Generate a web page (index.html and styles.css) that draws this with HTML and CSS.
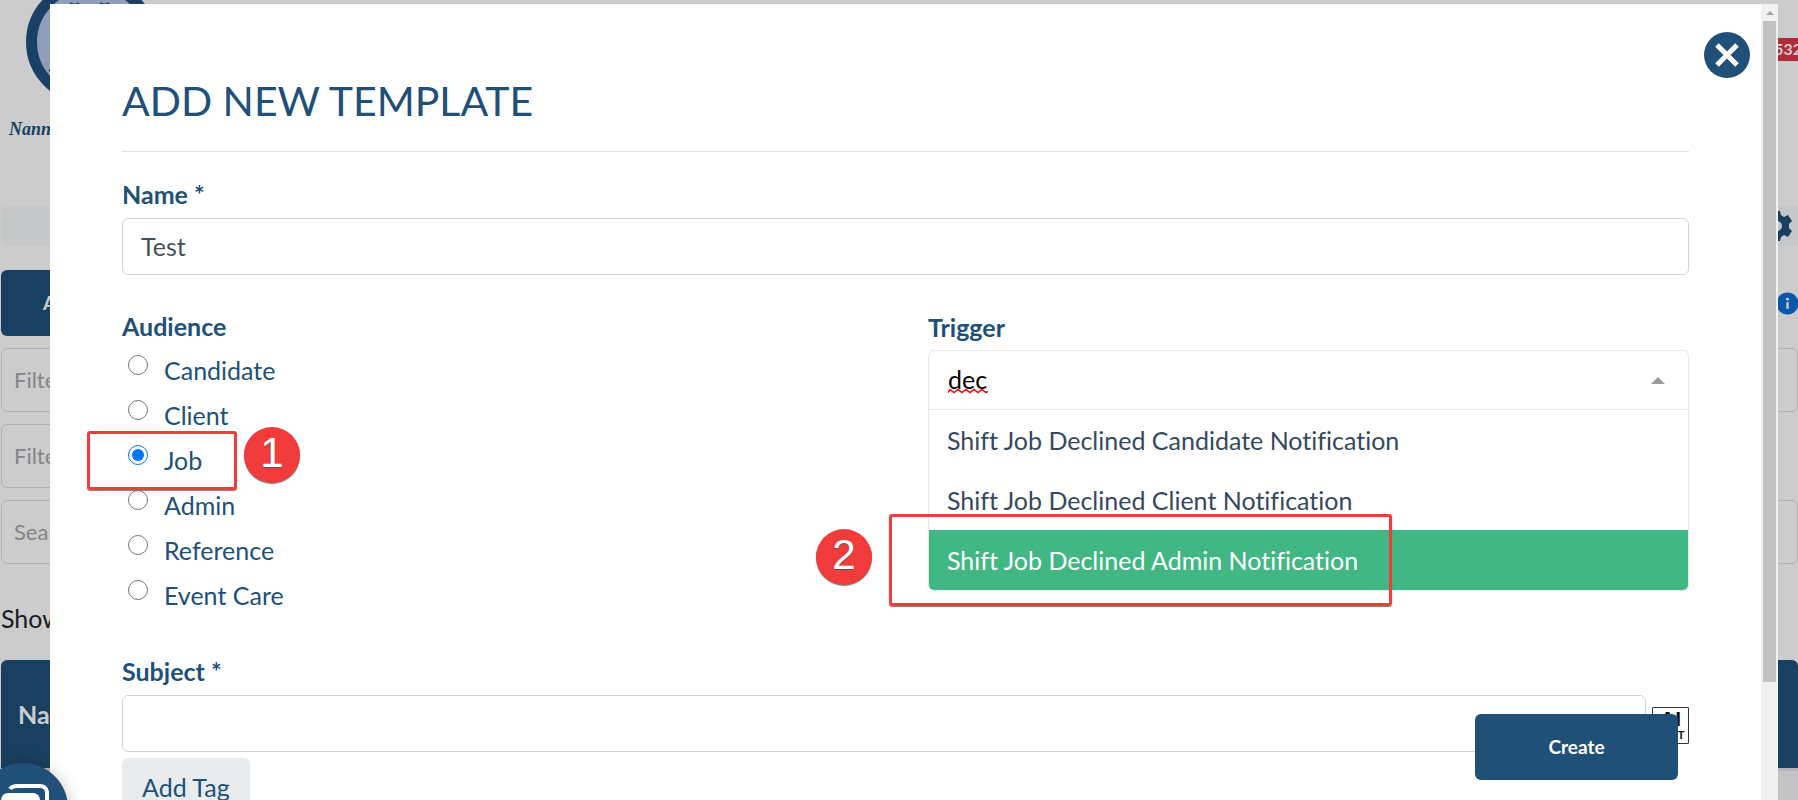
FILE: index.html
```html
<!DOCTYPE html>
<html lang="en">
<head>
<meta charset="utf-8">
<title>Add New Template</title>
<link rel="stylesheet" href="styles.css">
</head>
<body>
<div class="page">
  <header class="page-top">
    <div class="brand">
      <svg class="brand-mark" viewBox="0 0 136 106" aria-hidden="true"><ellipse cx="67" cy="42" rx="60.500" ry="58" fill="#b3c5ea" stroke="#225080" stroke-width="11"/><path d="M24 71l4-3M45 3q5 3 9 0M75 3q5 3 9 0" stroke="#225080" stroke-width="2" fill="none"/></svg>
      <span class="brand-name">Nannies</span>
    </div>
    <span class="count">532</span>
  </header>
  <div class="strip">
    <svg class="gear" viewBox="0 0 32 32" aria-hidden="true"><path fill="#205078" fill-rule="evenodd" d="M13 1h6l1 4 3 2 4-2 4 6-3 3v4l3 3-4 6-4-2-3 2-1 4h-6l-1-4-3-2-4 2-4-6 3-3v-4l-3-3 4-6 4 2 3-2zM16 11a5 5 0 1 0 0 10a5 5 0 0 0 0-10z"/></svg>
  </div>
  <div class="page-actions">
    <button class="page-btn" type="button">Add New Template</button>
    <svg class="info" viewBox="0 0 24 24" aria-hidden="true"><circle cx="12" cy="12" r="11.500" fill="#0d6fd8"/><circle cx="12" cy="7.500" r="1.500" fill="#fff"/><path d="M12 10.500v7" stroke="#fff" stroke-width="2.500"/></svg>
  </div>
  <div class="filters">
    <input class="filter" aria-label="Filter by audience" placeholder="Filter by audience">
    <input class="filter filter-half" aria-label="Filter by type" placeholder="Filter by type">
    <input class="filter" aria-label="Search" placeholder="Search">
  </div>
  <p class="showing">Showing</p>
  <div class="table-head">Name</div>
  <div class="table-row"></div>
</div>

<div class="overlay">
  <div class="modal" role="dialog" aria-labelledby="title">
    <form class="form">
      <button class="close" type="button" aria-label="Close"><svg viewBox="0 0 46 46"><path d="M13 13l20 20M33 13l-20 20" stroke="#fff" stroke-width="5"/></svg></button>
      <h1 class="title" id="title">ADD NEW TEMPLATE</h1>
      <div class="field">
        <label class="label" for="name">Name *</label>
        <input class="input" id="name" value="Test">
      </div>
      <div class="columns">
        <fieldset class="audience">
          <legend class="label">Audience</legend>
          <label class="choice"><input type="radio" name="audience">Candidate</label>
          <label class="choice"><input type="radio" name="audience">Client</label>
          <div class="marked">
            <label class="choice"><input type="radio" name="audience" checked>Job</label>
            <span class="frame frame-job"></span>
            <span class="step step-job">1</span>
          </div>
          <label class="choice"><input type="radio" name="audience">Admin</label>
          <label class="choice"><input type="radio" name="audience">Reference</label>
          <label class="choice"><input type="radio" name="audience">Event Care</label>
        </fieldset>
        <div class="trigger">
          <label class="label" for="trigger">Trigger</label>
          <div class="combo">
            <div class="combo-head">
              <input class="combo-input" id="trigger" value="dec" spellcheck="false">
              <svg class="squiggle" viewBox="0 0 40 6" aria-hidden="true"><path d="M0 4.500l2-3 4 3 4-3 4 3 4-3 4 3 4-3 4 3 4-3 4 3 2-1" fill="none" stroke="#f00" stroke-width="1.500"/></svg>
              <span class="caret"></span>
            </div>
            <ul class="options">
              <li class="option">Shift Job Declined Candidate Notification</li>
              <li class="option">Shift Job Declined Client Notification</li>
              <li class="option option-active">Shift Job Declined Admin Notification
                <span class="frame frame-option"></span>
                <span class="step step-option">2</span>
              </li>
            </ul>
          </div>
        </div>
      </div>
      <div class="field">
        <label class="label" for="subject">Subject *</label>
        <div class="subject-row">
          <input class="input" id="subject">
          <span class="test-icon"><b class="test-mark">AI</b><b class="test-word">TEST</b></span>
        </div>
      </div>
      <button class="tag" type="button">Add Tag</button>
      <button class="create" type="button">Create</button>
    </form>
    <div class="rail" aria-hidden="true"><span class="rail-up"></span><span class="thumb"></span></div>
  </div>
</div>
<button class="chat" type="button" aria-label="Chat"><svg viewBox="0 0 90 90"><path d="M32 26q2-3 8-3h22q6 0 7 6v24" fill="none" stroke="#fff" stroke-width="4"/><rect x="23" y="30" width="39" height="32" rx="7" fill="#fff"/></svg></button>
</body>
</html>
```
FILE: styles.css
```css
* { box-sizing: border-box; }

body {
  margin: 0;
  height: 100vh;
  overflow: hidden;
  font-family: Lato, "Open Sans", sans-serif;
  font-size: 25px;
  font-variant-ligatures: none;
  line-height: 30px;
  color: #205078;
}

input, button { font: inherit; }

/* Page behind the dialog */
.page { padding-left: 1px; }
.page-top { display: flex; justify-content: space-between; height: 206px; }
.brand { display: flex; flex-direction: column; align-items: flex-start; gap: 8px; padding-left: 8px; }
.brand-mark { width: 136px; height: 106px; margin-left: 16px; }
.brand-name { font-family: "Liberation Serif", serif; font-size: 18px; font-weight: bold; font-style: italic; }
.count { height: 23px; margin-top: 38px; padding: 0 0 0 6px; background: #dc3545; color: #fff; font-size: 16px; font-weight: bold; line-height: 22px; margin-right: -4px; }
.strip { display: flex; justify-content: flex-end; align-items: center; height: 40px; padding-right: 5px; border-radius: 6px 0 0 6px; background: #f8f9fb; }
.gear { width: 32px; height: 32px; }
.page-actions { display: flex; justify-content: space-between; align-items: center; margin-top: 24px; }
.page-btn { height: 66px; padding: 0 42px; border: 0; border-radius: 6px; background: #205078; color: #fff; font-size: 19px; font-weight: bold; }
.info { width: 23px; height: 23px; margin-right: -1px; }
.filters { display: flex; flex-direction: column; gap: 12px; margin-top: 12px; }
.filter { width: 100%; height: 64px; padding: 0 12px 2px; border: 1px solid #dddfe2; border-radius: 6px; background: #fff; font-size: 22px; }
.filter-half { width: 50%; }
.filter::placeholder { color: #a5a7aa; }
.showing { margin: 39px 0 27px; color: #212529; }
.table-head { height: 108px; padding: 39px 17px; border-radius: 6px 6px 0 0; background: #205078; color: #fff; font-weight: bold; }
.table-row { height: 40px; border-top: 3px solid #dee2e6; background: #f5f6f8; }

/* Dialog */
.overlay { position: fixed; inset: 0; padding: 4px 20px 0 50px; background: rgba(0, 0, 0, 0.2); }
.modal { display: flex; height: 100%; overflow: hidden; background: #fff; }
.form { position: relative; flex: 1; padding: 72px 72px 0; }
.title { margin: 0; padding-bottom: 25px; border-bottom: 1px solid #dfe2e5; font-size: 41px; font-weight: normal; line-height: 50px; }
.close { position: absolute; top: 28px; right: 11px; width: 46px; height: 46px; padding: 0; border: 0; border-radius: 50%; background: #205078; }
.close svg { display: block; }
.label { display: block; padding: 0; font-weight: bold; line-height: 30px; }
.field { display: flex; flex-direction: column; gap: 9px; margin-top: 27px; }
.input { width: 100%; height: 57px; padding: 0 18px 2px; border: 1px solid #ced4da; border-radius: 6px; background: #fff; color: #495057; }
.columns { display: grid; grid-template-columns: 1fr 1fr; gap: 45px; margin-top: 36px; }
.audience { margin: 0; padding: 0; border: 0; }
.choice { display: flex; gap: 16px; height: 45px; padding: 14px 0 0 6px; line-height: 30px; }
.choice input { width: 20px; height: 20px; margin: 0; }
.marked { position: relative; }
.frame { position: absolute; border: 3px solid #f23c3c; border-radius: 3px; box-shadow: 0 1px 1px #777; }
.frame-job { top: 0; left: -35px; width: 150px; height: 59px; }
.step { position: absolute; width: 56px; height: 56px; border-radius: 50%; background: #f23c3c; box-shadow: 0 1px 1px #777; color: #fff; font-family: "Liberation Sans", sans-serif; font-size: 42px; line-height: 52px; text-align: center; text-shadow: 0 1px 1px #555; }
.step-job { top: -4px; left: 122px; }
.trigger { display: flex; flex-direction: column; gap: 8px; padding-top: 1px; }
.combo { border: 1px solid #e8e8e8; border-radius: 6px; }
.combo-head { position: relative; display: flex; align-items: center; height: 59px; padding: 0 23px 0 19px; border-bottom: 1px solid #e8e8e8; }
.combo-input { flex: 1; padding: 0 0 3px; border: 0; outline: 0; background: none; color: #000; }
.squiggle { position: absolute; left: 19px; top: 37px; width: 40px; height: 6px; }
.caret { border: 7px solid transparent; border-top: 0; border-bottom: 7px solid #999; }
.options { margin: 0; padding: 0; list-style: none; color: #35495e; }
.option { position: relative; height: 60px; padding: 15px 18px; }
.option-active { border-radius: 0 0 5px 5px; background: #41b883; color: #fff; }
.frame-option { top: -16px; left: -40px; width: 503px; height: 92px; }
.step-option { top: -1px; left: -113px; }
.columns + .field { margin-top: 45px; }
.subject-row { display: flex; align-items: center; gap: 6px; }
.test-icon { display: flex; flex-direction: column; flex: none; align-items: center; width: 37px; height: 37px; margin-top: 4px; border: 1px solid #333; border-radius: 1px; font-family: "Liberation Sans", sans-serif; color: #111; }
.test-mark { font-size: 21px; line-height: 22px; }
.test-word { font-size: 11px; line-height: 10px; }
.tag { align-self: flex-start; height: 58px; margin-top: 6px; padding: 0 20px; border: 0; border-radius: 6px; background: #e9ecef; color: #205078; }
.create { position: absolute; right: 83px; bottom: 20px; width: 203px; height: 66px; border: 0; border-radius: 6px; background: #205078; color: #fff; font-size: 19px; font-weight: bold; }
.rail { display: flex; flex-direction: column; align-items: center; width: 17px; background: #f1f1f1; }
.rail-up { margin: 7px 0 6px; border: 4px solid transparent; border-top: 0; border-bottom-color: #a3a3a3; }
.thumb { width: 13px; height: 83%; background: #c1c1c1; }

.chat { position: fixed; left: -22px; bottom: -53px; width: 90px; height: 90px; padding: 0; border: 0; border-radius: 50%; background: #205078; box-shadow: 0 2px 16px rgba(0, 0, 0, 0.25); }
.chat svg { display: block; }
```
